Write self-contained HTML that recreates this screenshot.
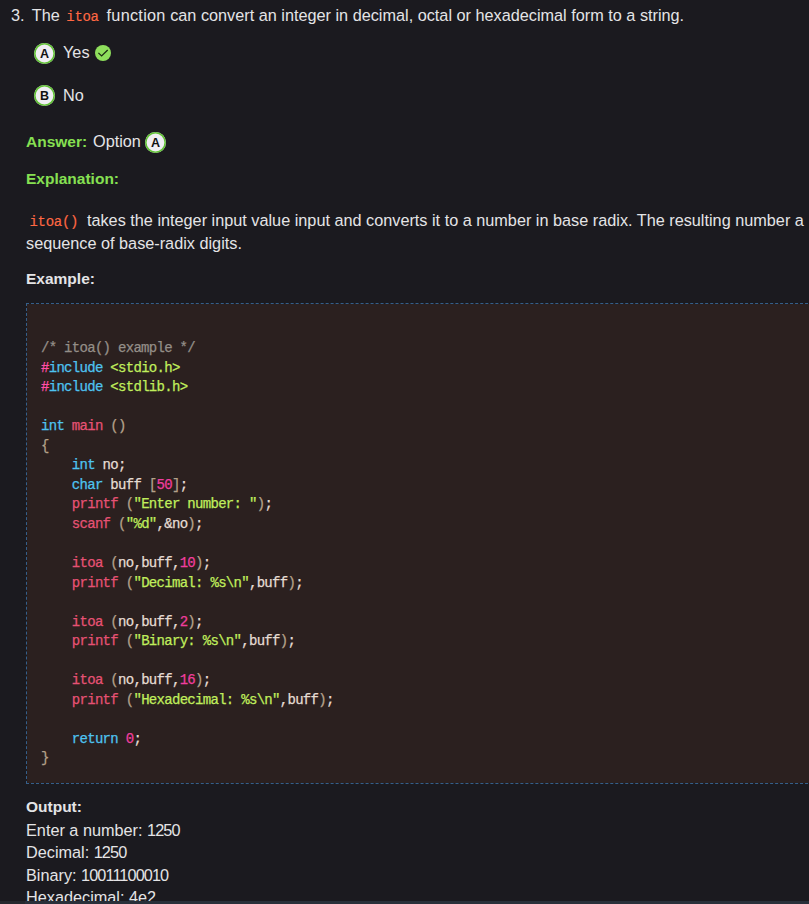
<!DOCTYPE html>
<html><head><meta charset="utf-8">
<style>
html,body{margin:0;padding:0;}
body{width:809px;height:904px;overflow:hidden;background:#1b1a1f;position:relative;font-family:"Liberation Sans",sans-serif;color:#e4e4e6;font-size:16.25px;}
.a{position:absolute;white-space:pre;line-height:20px;}
.ic{color:#ff6843;font-family:"Liberation Mono",monospace;font-size:14px;letter-spacing:-0.3px;padding:0 3.3px 0 2px;-webkit-text-stroke:0.15px currentColor;}
.g{color:#86e052;font-weight:bold;font-size:15.5px;}
.b{font-weight:bold;font-size:15.5px;}
.circ{position:absolute;width:21px;height:21px;box-shadow:inset 0 0 0 1.6px #62c236;border-radius:50%;background:#f0eef3;color:#111;font-weight:bold;font-size:12.5px;line-height:23px;text-align:center;font-family:"Liberation Sans",sans-serif;}
.code{position:absolute;left:26px;top:303px;width:800px;height:479px;border:1px dashed #355f8a;background:#2b201f;background-clip:padding-box;}
.cl{position:absolute;left:41px;white-space:pre;font-family:"Liberation Mono",monospace;font-size:14px;letter-spacing:-0.7px;line-height:19.55px;color:#e6ddd4;-webkit-text-stroke:0.25px currentColor;}
.cm{color:#948e88}.pp{color:#ff4fa8}.kw{color:#4ec3f0}.st{color:#c0ee5c}.fn{color:#e65274}.nu{color:#f03e9e}.pu{color:#b4a08a}
.dg{letter-spacing:-0.9px}
.strip{position:absolute;left:0;top:901px;width:809px;height:3px;background:linear-gradient(90deg,#25282e 0,#25282e 25px,#29303a 25px);}
</style></head><body>
<div class="a" style="left:11px;top:5px;"><span style="margin-right:3px">3.</span> The <span class="ic">itoa</span> <span style="letter-spacing:0.28px">function</span> can convert an integer in decimal, octal or hexadecimal form to a string.</div>

<div class="circ" style="left:34px;top:43px;">A</div>
<div class="a" style="left:63px;top:42px;">Yes</div>
<svg style="position:absolute;left:95px;top:45px;" width="16" height="16" viewBox="0 0 16 16"><circle cx="8" cy="8" r="8" fill="#8ede5c"/><path d="M3.4 7.9 L6.6 10.9 L12.7 5.0" fill="none" stroke="#1c2a14" stroke-width="1.3"/></svg>

<div class="circ" style="left:34px;top:85px;">B</div>
<div class="a" style="left:63px;top:85px;">No</div>

<div class="a" style="left:26px;top:131px;"><span class="g">Answer:</span><span style="position:absolute;left:67px;top:0">Option</span></div>
<div class="circ" style="left:145px;top:132px;">A</div>

<div class="a" style="left:26px;top:168px;"><span class="g">Explanation:</span></div>

<div class="a" style="left:26px;top:210px;"><span class="ic" style="padding-left:3.5px;padding-right:4.3px">itoa()</span> takes the integer input value input and converts it to a number in base radix. The resulting number a</div>
<div class="a" style="left:26px;top:233px;">sequence of base-radix digits.</div>
<div class="a b" style="left:26px;top:269px;">Example:</div>

<div class="code"></div>
<div class="cl" style="top:339px;"><span class="cm">/* itoa() example */</span>
<span class="pp">#</span><span class="kw">include</span> <span class="st">&lt;stdio.h&gt;</span>
<span class="pp">#</span><span class="kw">include</span> <span class="st">&lt;stdlib.h&gt;</span>

<span class="kw">int</span> <span class="fn">main</span> <span class="pu">()</span>
<span class="pu">{</span>
    <span class="kw">int</span> no;
    <span class="kw">char</span> buff <span class="pu">[</span><span class="nu">50</span><span class="pu">]</span>;
    <span class="fn">printf</span> <span class="pu">(</span><span class="st">"Enter number: "</span><span class="pu">)</span>;
    <span class="fn">scanf</span> <span class="pu">(</span><span class="st">"%d"</span>,&amp;no<span class="pu">)</span>;

    <span class="fn">itoa</span> <span class="pu">(</span>no,buff,<span class="nu">10</span><span class="pu">)</span>;
    <span class="fn">printf</span> <span class="pu">(</span><span class="st">"Decimal: %s\n"</span>,buff<span class="pu">)</span>;

    <span class="fn">itoa</span> <span class="pu">(</span>no,buff,<span class="nu">2</span><span class="pu">)</span>;
    <span class="fn">printf</span> <span class="pu">(</span><span class="st">"Binary: %s\n"</span>,buff<span class="pu">)</span>;

    <span class="fn">itoa</span> <span class="pu">(</span>no,buff,<span class="nu">16</span><span class="pu">)</span>;
    <span class="fn">printf</span> <span class="pu">(</span><span class="st">"Hexadecimal: %s\n"</span>,buff<span class="pu">)</span>;

    <span class="kw">return</span> <span class="nu">0</span>;
<span class="pu">}</span></div>

<div class="a b" style="left:26px;top:797px;">Output:</div>
<div class="a" style="left:26px;top:820px;">Enter a number: <span class="dg">1250</span></div>
<div class="a" style="left:26px;top:842px;">Decimal: <span class="dg">1250</span></div>
<div class="a" style="left:26px;top:865px;">Binary: <span class="dg">10011100010</span></div>
<div class="a" style="left:26px;top:887px;">Hexadecimal: 4e2</div>
<div class="strip"></div>
</body></html>
